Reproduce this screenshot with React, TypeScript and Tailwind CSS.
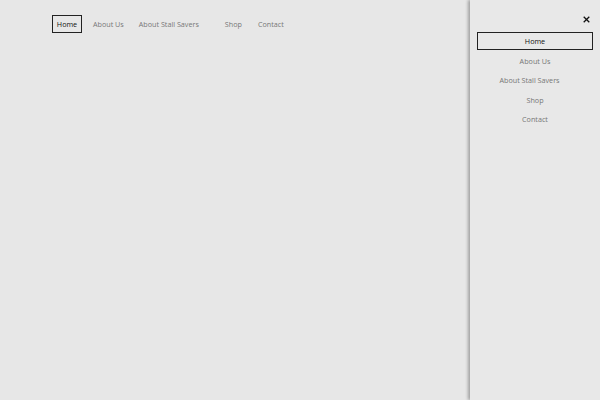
const links = ['Home', 'About Us', 'About Stall Savers', 'Shop', 'Contact']

const topGaps = ['', 'ml-[11px]', 'ml-[15px]', 'ml-[26px]', 'ml-[16px]']

export default function App() {
  return (
    <div className="relative h-[400px] w-[600px] overflow-hidden bg-[#e7e7e7] font-['Open_Sans',sans-serif]">
      <nav className="flex items-center pl-[52px] pt-[15px]">
        {links.map((l, i) =>
          i === 0 ? (
            <a key={l} className="flex h-[18px] w-[30px] items-center justify-center border border-[#222] text-[7.2px] text-[#111]">
              {l}
            </a>
          ) : (
            <a key={l} className={`${topGaps[i]} text-[7.2px] leading-[18px] text-[#777]`}>
              {l}
            </a>
          ),
        )}
      </nav>

      <aside className="absolute right-0 top-0 flex h-full w-[130px] flex-col bg-[#e8e8e8] shadow-[-2px_0_3px_rgba(0,0,0,0.3)]">
        <div className="flex justify-end pr-[10px] pt-[16px]">
          <svg width="7" height="7" viewBox="0 0 10 10">
            <path d="M1 1 L9 9 M9 1 L1 9" stroke="#111" strokeWidth="1.8" />
          </svg>
        </div>
        <ul className="mt-[9px] flex flex-col px-[7px]">
          {links.map((l, i) =>
            i === 0 ? (
              <li key={l} className="mb-[1.5px] flex h-[18px] items-center justify-center border border-[#222] text-[7.2px] text-[#111]">
                {l}
              </li>
            ) : (
              <li
                key={l}
                className={`flex h-[19.5px] items-center justify-center text-[7.2px] text-[#777] ${i === 2 ? 'pr-[11px]' : ''}`}
              >
                {l}
              </li>
            ),
          )}
        </ul>
      </aside>
    </div>
  )
}
